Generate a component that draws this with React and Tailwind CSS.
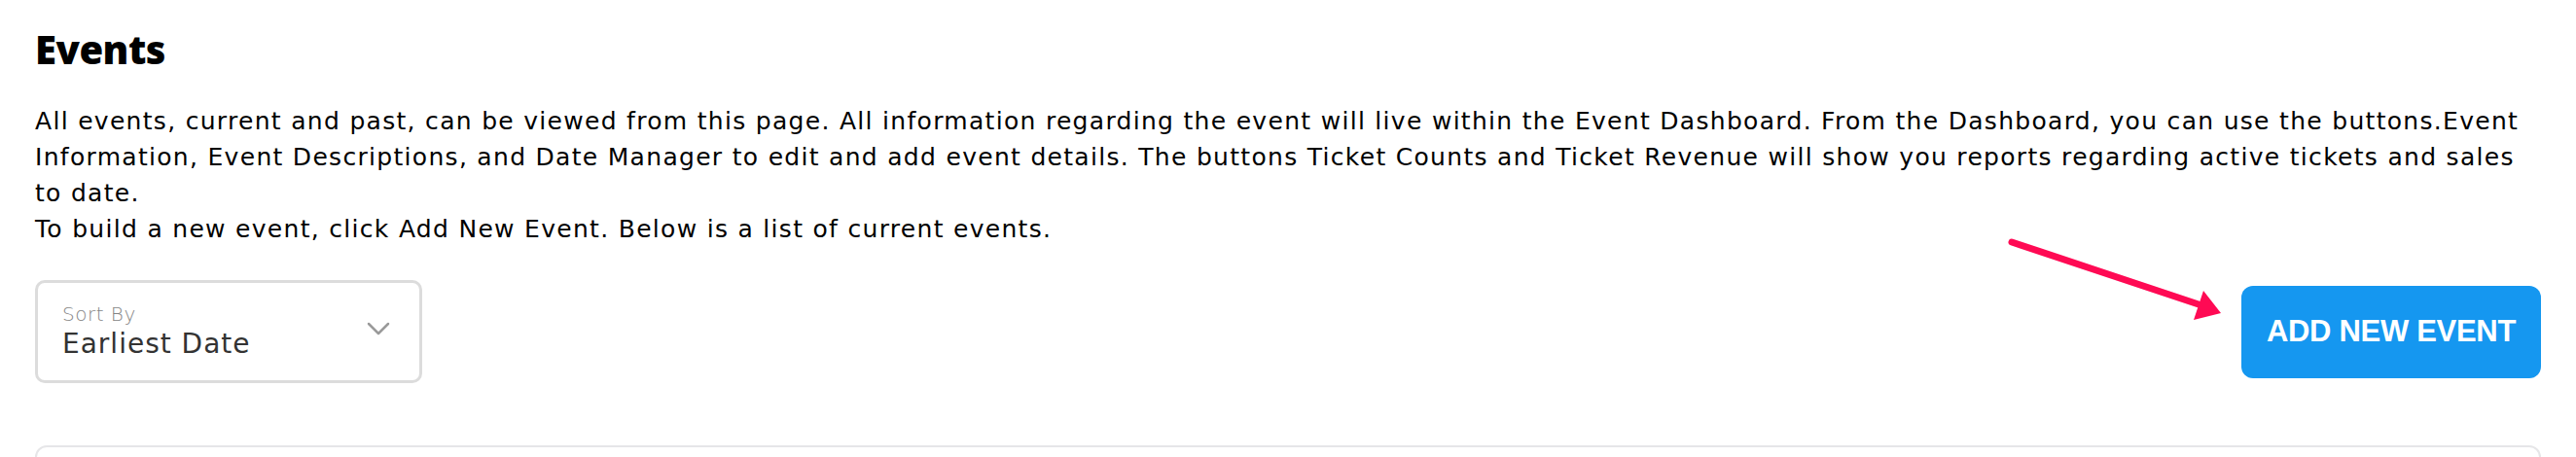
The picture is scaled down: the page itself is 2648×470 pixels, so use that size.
import React from "react";

const FONT = { fontFamily: '"DejaVu Sans", "Liberation Sans", sans-serif' };

// ── Annotation arrow pointing at the button ─────────────────────────────────
function PointerArrow() {
  return (
    <svg
      className="absolute left-[2060px] top-[240px] pointer-events-none"
      width="240"
      height="100"
      viewBox="0 0 240 100"
      fill="none"
    >
      <line
        x1="8"
        y1="9"
        x2="200"
        y2="73"
        stroke="#ff0a54"
        strokeWidth="7"
        strokeLinecap="round"
      />
      <polygon points="223,82 205,59 195,89" fill="#ff0a54" />
    </svg>
  );
}

// ── Sort dropdown ───────────────────────────────────────────────────────────
function SortSelect() {
  return (
    <button className="w-[398px] h-[106px] border-[3px] border-[#dcdcdc] rounded-[10px] bg-white flex items-center justify-between pl-[25px] pr-[30px] text-left">
      <div className="flex flex-col">
        <span className="text-[20px] leading-[26px] text-[#858585] font-light tracking-[0.5px]">
          Sort By
        </span>
        <span className="text-[28px] leading-[36px] text-[#333333] tracking-[1px]">
          Earliest Date
        </span>
      </div>
      <svg width="24" height="14" viewBox="0 0 24 14" fill="none" className="-mt-[6px]">
        <path
          d="M2 2l10 10L22 2"
          stroke="#9a9a9a"
          strokeWidth="2.5"
          strokeLinecap="round"
          strokeLinejoin="round"
        />
      </svg>
    </button>
  );
}

export default function App() {
  return (
    <div className="relative bg-white w-[2648px] h-[470px] overflow-hidden px-[36px] pt-[25px]" style={FONT}>
      <h1
        className="text-[40px] leading-[52px] font-extrabold text-black tracking-[-0.5px]"
        style={{ fontFamily: '"Open Sans", sans-serif' }}
      >
        Events
      </h1>

      <div className="mt-[29px] text-[25px] leading-[37px] text-black tracking-[1.3px]">
        <p>
          All events, current and past, can be viewed from this page. All
          information regarding the event will live within the Event
          Dashboard. From the Dashboard, you can use the buttons.Event
          Information, Event Descriptions, and Date Manager to edit and add
          event details. The buttons Ticket Counts and Ticket Revenue will
          show you reports regarding active tickets and sales to date.
        </p>
        <p>
          To build a new event, click Add New Event. Below is a list of
          current events.
        </p>
      </div>

      <div className="mt-[34px] flex items-center justify-between">
        <SortSelect />
        <button
          className="w-[308px] h-[95px] rounded-[12px] bg-[#1597f0] text-white text-[31px] font-bold tracking-[-0.3px]"
          style={{ fontFamily: '"Liberation Sans", sans-serif' }}
        >
          ADD NEW EVENT
        </button>
      </div>

      <div className="mt-[64px] h-[40px] border-2 border-[#e6e6e8] rounded-t-[12px]" />

      <PointerArrow />
    </div>
  );
}
